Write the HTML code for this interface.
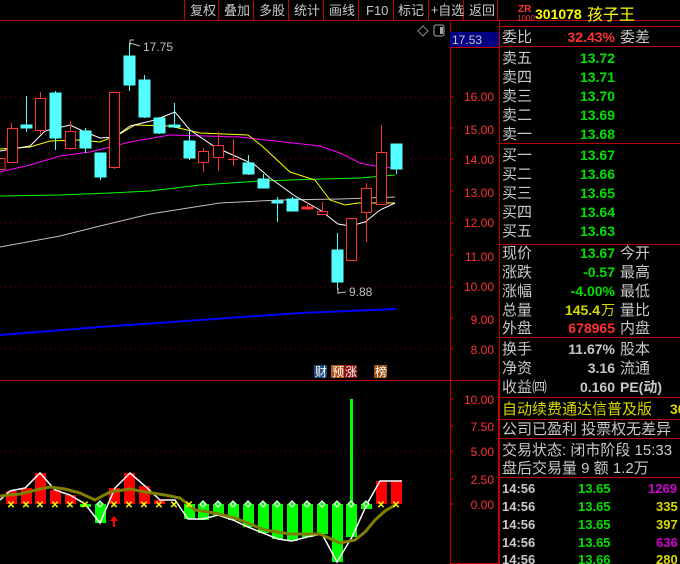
<!DOCTYPE html>
<html><head><meta charset="utf-8"><style>
html,body{margin:0;padding:0;background:#000;}
svg{display:block}
text{font-family:"Liberation Sans","Noto Sans CJK SC",sans-serif;}
.cn{font-family:"WenQuanYi Zen Hei","Noto Sans CJK SC",sans-serif;}
</style></head><body>
<svg width="680" height="564" viewBox="0 0 680 564" xmlns="http://www.w3.org/2000/svg">
<rect width="680" height="564" fill="#000"/>
<!-- toolbar -->
<g stroke="#c00000" stroke-width="1">
<line x1="0" y1="20.5" x2="680" y2="20.5"/>
<line x1="184.5" y1="0" x2="184.5" y2="20"/><line x1="218.5" y1="0" x2="218.5" y2="20"/>
<line x1="253.5" y1="0" x2="253.5" y2="20"/><line x1="288.5" y1="0" x2="288.5" y2="20"/>
<line x1="323.5" y1="0" x2="323.5" y2="20"/><line x1="358.5" y1="0" x2="358.5" y2="20"/>
<line x1="393.5" y1="0" x2="393.5" y2="20"/><line x1="428.5" y1="0" x2="428.5" y2="20"/>
<line x1="463.5" y1="0" x2="463.5" y2="20"/><line x1="497.5" y1="0" x2="497.5" y2="20"/>
</g>
<g fill="#c8c8c8" font-size="13" class="cn">
<text x="190" y="15" class="cn">复权</text><text x="224" y="15" class="cn">叠加</text>
<text x="259" y="15" class="cn">多股</text><text x="294" y="15" class="cn">统计</text>
<text x="329" y="15" class="cn">画线</text><text x="366" y="15" font-family="Liberation Sans">F10</text>
<text x="398" y="15" class="cn">标记</text><text x="431" y="15" class="cn">+自选</text>
<text x="469" y="15" class="cn">返回</text>
</g>
<!-- main frame -->
<g stroke="#c00000" stroke-width="1">
<line x1="450.5" y1="20" x2="450.5" y2="564"/>
<line x1="499.5" y1="20" x2="499.5" y2="564"/>
<line x1="0" y1="380.5" x2="450" y2="380.5"/>
<rect x="450.5" y="380.5" width="48" height="183" fill="none"/>
</g>
<rect x="450" y="32" width="49" height="15" fill="#000080"/>
<text x="452" y="44" fill="#c8c8c8" font-size="12">17.53</text>
<line x1="450" y1="47.5" x2="499" y2="47.5" stroke="#c00000"/>
<path d="M423 26 L428 31 L423 36 L418 31 Z" fill="none" stroke="#888"/>
<rect x="434" y="25" width="10" height="11" rx="2" fill="none" stroke="#aaa"/><rect x="440" y="27" width="3" height="7" fill="#aaa"/>
<!-- grid -->
<g stroke="#800000" stroke-dasharray="1 4">
<line x1="0" y1="97" x2="450" y2="97"/><line x1="0" y1="159" x2="450" y2="159"/>
<line x1="0" y1="223" x2="450" y2="223"/><line x1="0" y1="287" x2="450" y2="287"/>
<line x1="0" y1="349" x2="450" y2="349"/>
<line x1="0" y1="451" x2="450" y2="451"/><line x1="0" y1="504" x2="450" y2="504"/>
</g>
<!-- axis labels -->
<g fill="#ff3232" font-size="12" text-anchor="end">
<text x="494" y="101">16.00</text><text x="494" y="134">15.00</text><text x="494" y="164">14.00</text>
<text x="494" y="197">13.00</text><text x="494" y="227">12.00</text><text x="494" y="261">11.00</text>
<text x="494" y="291">10.00</text><text x="494" y="324">9.00</text><text x="494" y="354">8.00</text>
<text x="494" y="404">10.00</text><text x="494" y="431">7.50</text><text x="494" y="456">5.00</text>
<text x="494" y="484">2.50</text><text x="494" y="509">0.00</text>
</g>
<g stroke="#c00000"><line x1="450" y1="97" x2="454" y2="97"/><line x1="450" y1="128" x2="454" y2="128"/><line x1="450" y1="159" x2="454" y2="159"/><line x1="450" y1="191" x2="454" y2="191"/><line x1="450" y1="223" x2="454" y2="223"/><line x1="450" y1="255" x2="454" y2="255"/><line x1="450" y1="287" x2="454" y2="287"/><line x1="450" y1="318" x2="454" y2="318"/><line x1="450" y1="349" x2="454" y2="349"/>
<line x1="450" y1="399" x2="454" y2="399"/><line x1="450" y1="426" x2="454" y2="426"/><line x1="450" y1="451" x2="454" y2="451"/><line x1="450" y1="479" x2="454" y2="479"/><line x1="450" y1="504" x2="454" y2="504"/></g>
<!-- MA lines -->
<g fill="none" stroke-width="1">
<polyline stroke="#0000ff" stroke-width="2" points="0,335 100,327 200,320 300,313 396,309"/>
<polyline stroke="#c0c0c0" points="0,247 60,236 100,226 150,214 220,203 280,200 340,199 395,197"/>
<polyline stroke="#00ff00" points="0,196 60,195 110,193 150,191 200,185 260,181 320,179 360,178 395,175"/>
<polyline stroke="#ff00ff" points="0,172 30,165 60,156 90,152 130,142 170,135 240,137 320,146 340,153 360,163 380,167 395,168"/>
<polyline stroke="#ffff00" points="0,149 30,147 50,141 80,140 100,142 118,135 135,125 170,126 200,133 248,135 262,146 290,172 315,180 330,200 345,205 358,203 375,203 395,203"/>
<polyline stroke="#ffffff" points="0,151 30,146 45,131 70,125 85,132 100,138 115,137 130,126 155,120 175,112 190,130 215,147 235,156 255,165 270,178 295,196 320,210 338,224 350,226 365,222 380,210 395,203"/>
</g>
<!-- candles -->
<g stroke-width="1">
<g stroke="#ff3232" fill="none">
<line x1="11.5" y1="123" x2="11.5" y2="163"/><rect x="7.5" y="128.5" width="10" height="34" fill="#000"/>
<rect x="-3" y="158.5" width="8" height="11" fill="#000"/>
<line x1="40.5" y1="92" x2="40.5" y2="134"/><rect x="35.5" y="98.5" width="10" height="32" fill="#000"/>
<line x1="70.5" y1="121" x2="70.5" y2="150"/><rect x="65.5" y="131.5" width="10" height="17" fill="#000"/>
<line x1="114.5" y1="92" x2="114.5" y2="169"/><rect x="109.5" y="92.5" width="10" height="75" fill="#000"/>
<line x1="203.5" y1="148" x2="203.5" y2="172"/><rect x="198.5" y="151.5" width="10" height="11" fill="#000"/>
<line x1="218.5" y1="132" x2="218.5" y2="171"/><rect x="213.5" y="145.5" width="10" height="12" fill="#000"/>
<line x1="233.5" y1="139" x2="233.5" y2="166"/><line x1="228" y1="159.5" x2="238" y2="159.5"/>
<line x1="307.5" y1="202" x2="307.5" y2="210"/><rect x="302" y="207" width="11" height="2" fill="#ff3232"/>
<line x1="322.5" y1="202" x2="322.5" y2="212"/><rect x="317.5" y="211.5" width="10" height="3" fill="#000"/>
<rect x="346.5" y="218.5" width="10" height="42" fill="#000"/>
<line x1="366.5" y1="183" x2="366.5" y2="242"/><rect x="361.5" y="188.5" width="10" height="24" fill="#000"/>
<line x1="381.5" y1="125" x2="381.5" y2="204"/><rect x="376.5" y="152.5" width="10" height="52" fill="#000"/>
</g>
<g stroke="#54ffff" fill="#54ffff">
<line x1="26.5" y1="96" x2="26.5" y2="132"/><rect x="21" y="125" width="11" height="3"/>
<line x1="55.5" y1="91" x2="55.5" y2="150"/><rect x="50" y="93" width="11" height="45"/>
<line x1="85.5" y1="128" x2="85.5" y2="153"/><rect x="80" y="131" width="11" height="17"/>
<line x1="100.5" y1="153" x2="100.5" y2="180"/><rect x="95" y="153" width="11" height="24"/>
<line x1="129.5" y1="43" x2="129.5" y2="91"/><rect x="124" y="56" width="11" height="29"/>
<line x1="144.5" y1="75" x2="144.5" y2="118"/><rect x="139" y="80" width="11" height="37"/>
<line x1="159.5" y1="117" x2="159.5" y2="134"/><rect x="154" y="118" width="11" height="15"/>
<line x1="174.5" y1="103" x2="174.5" y2="128"/><rect x="169" y="125" width="11" height="2"/>
<line x1="189.5" y1="130" x2="189.5" y2="160"/><rect x="184" y="141" width="11" height="17"/>
<line x1="248.5" y1="155" x2="248.5" y2="175"/><rect x="243" y="163" width="11" height="11"/>
<line x1="263.5" y1="174" x2="263.5" y2="188"/><rect x="258" y="179" width="11" height="9"/>
<line x1="277.5" y1="197" x2="277.5" y2="222"/><rect x="272" y="201" width="11" height="2"/>
<line x1="292.5" y1="197" x2="292.5" y2="211"/><rect x="287" y="199" width="11" height="12"/>
<line x1="337.5" y1="233" x2="337.5" y2="290"/><rect x="332" y="250" width="11" height="32"/>
<line x1="396.5" y1="144" x2="396.5" y2="174"/><rect x="391" y="144" width="11" height="25"/>
</g>
</g>
<g fill="#c0c0c0" font-size="12">
<path d="M130 46 L130 40 L134 40 M130 43 L140 46" stroke="#c0c0c0" fill="none"/>
<text x="143" y="51">17.75</text>
<path d="M338 288 L338 294 M338 293 L346 292" stroke="#c0c0c0" fill="none"/>
<text x="349" y="296">9.88</text>
</g>
<!-- badges -->
<rect x="314" y="365" width="13" height="13" fill="#1e4a7a"/><text x="315" y="376" fill="#fff" font-size="12" class="cn">财</text>
<rect x="331" y="365" width="13" height="13" fill="#b0501a"/><text x="332" y="376" fill="#fff" font-size="12" class="cn">预</text>
<rect x="344" y="365" width="13" height="13" fill="#8a1010"/><text x="345" y="376" fill="#fff" font-size="12" class="cn">涨</text>
<rect x="374" y="365" width="13" height="13" fill="#9a5010"/><text x="375" y="376" fill="#fff" font-size="12" class="cn">榜</text>
<!-- indicator bars -->
<g fill="#ff0000">
<rect x="6" y="491" width="11" height="13"/><rect x="21" y="488" width="11" height="16"/>
<rect x="35" y="473" width="11" height="31"/><rect x="50" y="490" width="11" height="14"/>
<rect x="65" y="495" width="11" height="9"/><rect x="109" y="488" width="11" height="16"/>
<rect x="124" y="473" width="11" height="31"/><rect x="139" y="486" width="11" height="18"/>
<rect x="154" y="500" width="11" height="4"/><rect x="376" y="481" width="11" height="23"/>
<rect x="391" y="481" width="11" height="23"/>
</g>
<g fill="#00ff00">
<rect x="80" y="504" width="11" height="3"/><rect x="95" y="504" width="11" height="19"/>
<rect x="184" y="504" width="11" height="15"/><rect x="198" y="504" width="11" height="16"/>
<rect x="213" y="504" width="11" height="11"/><rect x="228" y="504" width="11" height="16"/>
<rect x="243" y="504" width="11" height="23"/><rect x="258" y="504" width="11" height="29"/>
<rect x="272" y="504" width="11" height="35"/><rect x="287" y="504" width="11" height="37"/>
<rect x="302" y="504" width="11" height="33"/><rect x="317" y="504" width="11" height="30"/>
<rect x="332" y="504" width="11" height="58"/><rect x="346" y="504" width="11" height="33"/>
<rect x="361" y="504" width="11" height="5"/><rect x="350" y="399" width="3" height="105"/>
</g>
<polyline fill="none" stroke="#fff" stroke-width="1.5" points="0,500 10,491 25,488 40,473 55,490 70,495 85,504 100,523 115,488 130,473 145,486 160,500 175,500 188,519 203,519 218,515 233,520 248,527 263,533 278,539 292,541 307,537 322,534 337,562 352,537 367,504 380,481 402,481"/>
<polyline fill="none" stroke="#808000" stroke-width="3" points="0,496 20,494 40,489 50,487 65,489 80,493 95,500 110,492 130,489 145,492 165,495 180,498 195,510 215,513 235,518 250,524 265,530 290,534 320,534 340,543 355,540 365,532 375,520 385,511 395,505"/>
<g fill="#ffff00" font-size="10" font-weight="bold" text-anchor="middle">
<text x="11" y="508">✕</text><text x="26" y="508">✕</text><text x="40" y="508">✕</text><text x="55" y="508">✕</text><text x="70" y="508">✕</text><text x="85" y="508">✕</text>
<text x="114" y="508">✕</text><text x="129" y="508">✕</text><text x="144" y="508">✕</text><text x="159" y="508">✕</text><text x="174" y="508">✕</text><text x="189" y="508">✕</text>
<text x="381" y="508">✕</text><text x="396" y="508">✕</text>
</g>
<g fill="#00ff00" stroke="#fff" stroke-width="1.2">
<path d="M100 501 L103 504 L100 507 L97 504Z"/><path d="M203 501 L206 504 L203 507 L200 504Z"/><path d="M218 501 L221 504 L218 507 L215 504Z"/><path d="M233 501 L236 504 L233 507 L230 504Z"/><path d="M248 501 L251 504 L248 507 L245 504Z"/><path d="M263 501 L266 504 L263 507 L260 504Z"/><path d="M277 501 L280 504 L277 507 L274 504Z"/><path d="M292 501 L295 504 L292 507 L289 504Z"/><path d="M307 501 L310 504 L307 507 L304 504Z"/><path d="M322 501 L325 504 L322 507 L319 504Z"/><path d="M337 501 L340 504 L337 507 L334 504Z"/><path d="M351 501 L354 504 L351 507 L348 504Z"/><path d="M366 501 L369 504 L366 507 L363 504Z"/>
</g>
<path d="M114 516 L110 521 L113 521 L113 527 L115 527 L115 521 L118 521Z" fill="#ff0000"/>
<!-- right panel -->
<g stroke="#c00000">
<line x1="499" y1="26.5" x2="680" y2="26.5"/><line x1="499" y1="46.5" x2="680" y2="46.5"/>
<line x1="499" y1="143.5" x2="680" y2="143.5"/><line x1="499" y1="244.5" x2="680" y2="244.5"/>
<line x1="499" y1="337.5" x2="680" y2="337.5"/><line x1="499" y1="397.5" x2="680" y2="397.5"/>
<line x1="499" y1="419.5" x2="680" y2="419.5"/><line x1="499" y1="438.5" x2="680" y2="438.5"/>
<line x1="499" y1="477.5" x2="680" y2="477.5"/>
</g>
<text x="518" y="12" fill="#ff3232" font-size="10" font-weight="bold">ZR</text>
<text x="517" y="21" fill="#ff3232" font-size="8">1000</text>
<text x="535" y="19" fill="#ffff00" font-size="14" font-weight="bold">301078</text>
<text x="587" y="20" fill="#ffff00" font-size="16" class="cn">孩子王</text>
<g font-size="15" fill="#c8c8c8" class="cn">
<text x="502" y="42">委比</text><text x="620" y="42">委差</text>
<text x="502" y="63">卖五</text><text x="502" y="82">卖四</text><text x="502" y="101">卖三</text><text x="502" y="120">卖二</text><text x="502" y="139">卖一</text>
<text x="502" y="160">买一</text><text x="502" y="179">买二</text><text x="502" y="198">买三</text><text x="502" y="217">买四</text><text x="502" y="236">买五</text>
<text x="502" y="258">现价</text><text x="620" y="258">今开</text>
<text x="502" y="277">涨跌</text><text x="620" y="277">最高</text>
<text x="502" y="296">涨幅</text><text x="620" y="296">最低</text>
<text x="502" y="315">总量</text><text x="620" y="315">量比</text>
<text x="502" y="333">外盘</text><text x="620" y="333">内盘</text>
<text x="502" y="354">换手</text><text x="620" y="354">股本</text>
<text x="502" y="373">净资</text><text x="620" y="373">流通</text>
<text x="502" y="392">收益㈣</text><text x="620" y="392" font-family="Liberation Sans" font-weight="bold" font-size="14">PE(动)</text>
<text x="502" y="414" fill="#d8d800">自动续费通达信普及版</text><text x="670" y="414" fill="#d8d800" font-family="Liberation Sans" font-weight="bold" font-size="14">30</text>
<text x="502" y="434">公司已盈利 投票权无差异</text>
<text x="502" y="455">交易状态: 闭市阶段 15:33</text>
<text x="502" y="473">盘后交易量 9 额 1.2万</text>
</g>
<g font-size="14" font-weight="bold" text-anchor="end">
<text x="615" y="42" fill="#ff3232">32.43%</text>
<g fill="#00e000">
<text x="615" y="63">13.72</text><text x="615" y="82">13.71</text><text x="615" y="101">13.70</text><text x="615" y="120">13.69</text><text x="615" y="139">13.68</text>
<text x="615" y="160">13.67</text><text x="615" y="179">13.66</text><text x="615" y="198">13.65</text><text x="615" y="217">13.64</text><text x="615" y="236">13.63</text>
<text x="615" y="258">13.67</text><text x="615" y="277">-0.57</text><text x="615" y="296">-4.00%</text>
</g>
<text x="600" y="315" fill="#d8d800">145.4</text><text x="615" y="315" fill="#d8d800" font-weight="normal" class="cn" font-size="14">万</text>
<text x="615" y="333" fill="#ff3232">678965</text>
<g fill="#c8c8c8"><text x="615" y="354">11.67%</text><text x="615" y="373">3.16</text><text x="615" y="392">0.160</text></g>
</g>
<g font-size="13" font-weight="bold">
<g fill="#c8c8c8"><text x="502" y="493">14:56</text><text x="502" y="511">14:56</text><text x="502" y="529">14:56</text><text x="502" y="547">14:56</text><text x="502" y="564">14:56</text></g>
<g fill="#00e000"><text x="578" y="493">13.65</text><text x="578" y="511">13.65</text><text x="578" y="529">13.65</text><text x="578" y="547">13.65</text><text x="578" y="564">13.66</text></g>
<text x="648" y="493" fill="#d000d0">1269</text><text x="656" y="511" fill="#d8d800">335</text><text x="656" y="529" fill="#d8d800">397</text><text x="656" y="547" fill="#d000d0">636</text><text x="656" y="564" fill="#d8d800">280</text>
</g>
</svg>
</body></html>
